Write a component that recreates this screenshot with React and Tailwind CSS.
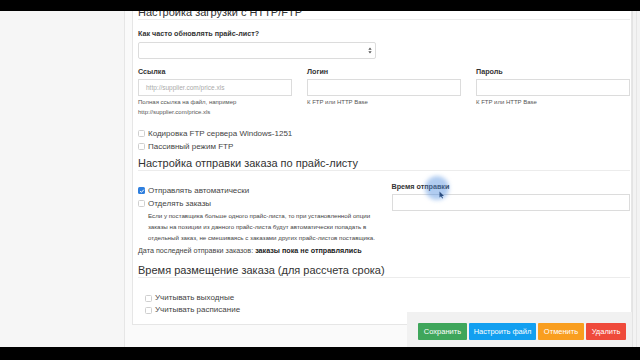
import React from "react";

const font = { fontFamily: '"Liberation Sans", Arial, sans-serif' };

function Box({ checked }) {
  if (checked) {
    return (
      <span className="inline-flex h-[7px] w-[7px] shrink-0 items-center justify-center rounded-[1.5px] bg-[#2f7fde]">
        <svg viewBox="0 0 8 8" className="h-[6px] w-[6px]">
          <path d="M1.5 4.2 L3.2 5.8 L6.5 2.2" fill="none" stroke="#fff" strokeWidth="1.3" />
        </svg>
      </span>
    );
  }
  return <span className="inline-block h-[7px] w-[7px] shrink-0 rounded-[1.5px] border border-[#cfcfcf] bg-white" />;
}

function Check({ label, checked, small, className = "" }) {
  return (
    <div className={`flex items-center gap-[3px] text-[8px] text-[#444] ${small ? "h-[12px]" : "h-[13px]"} ${className}`}>
      <Box checked={checked} />
      <span>{label}</span>
    </div>
  );
}

function Heading({ children, className = "" }) {
  return (
    <div className={`h-[15px] border-b border-[#ececec] text-[11px] leading-[14px] text-[#333] ${className}`}>
      {children}
    </div>
  );
}

function Label({ children, className = "" }) {
  return <div className={`h-[10px] text-[7.2px] font-bold leading-[10px] text-[#333] ${className}`}>{children}</div>;
}

function Input({ placeholder, className = "" }) {
  return (
    <div className={`flex h-[17px] items-center border border-[#dcdcdc] bg-white px-[7px] text-[6.5px] text-[#aaa] ${className}`}>
      {placeholder}
    </div>
  );
}

export default function App() {
  return (
    <div className="flex h-[360px] w-[640px] flex-col overflow-hidden bg-black" style={font}>
      <div className="h-[11px] bg-black" />
      <div className="relative flex flex-1 overflow-hidden bg-[#fafafa]">
        <div className="w-[125px] shrink-0 border-r border-[#e6e6e6] bg-[#f6f6f6]" />
        <div className="w-[507px] shrink-0 pl-[7px]">
          <div className="-mt-[20px] border border-[#e6e6e6] bg-white pb-[8px] pl-[5px] pr-[1px] pt-[13px]">
            <Heading>Настройка загрузки с HTTP/FTP</Heading>
            <Label className="mt-[9px]">Как часто обновлять прайс-лист?</Label>
            <div className="mt-[3px] flex h-[17px] w-[238px] items-center justify-end rounded-[2px] border border-[#dcdcdc] bg-white pr-[3px]">
              <svg viewBox="0 0 6 10" className="h-[7px] w-[4px]">
                <path d="M3 0.5 L5.5 4 L0.5 4 Z M3 9.5 L5.5 6 L0.5 6 Z" fill="#555" />
              </svg>
            </div>
            <div className="mt-[8px] grid grid-cols-3 gap-x-[15px]">
              <div>
                <Label>Ссылка</Label>
                <Input className="mt-[2px]" placeholder="http://supplier.com/price.xls" />
                <div className="mt-[1px] text-[6px] leading-[10px] text-[#555]">
                  Полная ссылка на файл, например
                  <br />
                  http://supplier.com/price.xls
                </div>
              </div>
              <div>
                <Label>Логин</Label>
                <Input className="mt-[2px]" />
                <div className="mt-[1px] text-[6px] leading-[10px] text-[#555]">К FTP или HTTP Base</div>
              </div>
              <div>
                <Label>Пароль</Label>
                <Input className="mt-[2px]" />
                <div className="mt-[1px] text-[6px] leading-[10px] text-[#555]">К FTP или HTTP Base</div>
              </div>
            </div>
            <Check className="mt-[10px]" label="Кодировка FTP сервера Windows-1251" />
            <Check label="Пассивный режим FTP" />
            <Heading className="mt-[3px]">Настройка отправки заказа по прайс-листу</Heading>
            <div className="grid grid-cols-2 gap-x-[15px]">
              <div className="pt-[13px]">
                <Check label="Отправлять автоматически" checked />
                <Check label="Отделять заказы" />
                <div className="ml-[10px] whitespace-nowrap text-[6.2px] leading-[11px] text-[#444]">
                  Если у поставщика больше одного прайс-листа, то при установленной опции
                  <br />
                  заказы на позиции из данного прайс-листа будут автоматически попадать в
                  <br />
                  отдельный заказ, не смешиваясь с заказами других прайс-листов поставщика.
                </div>
              </div>
              <div className="pt-[11px]">
                <Label>Время отправки</Label>
                <Input className="mt-[2px]" />
              </div>
            </div>
            <div className="mt-[2px] h-[11px] whitespace-nowrap text-[7.2px] leading-[11px] text-[#444]">
              Дата последней отправки заказов: <b className="text-[#222]">заказы пока не отправлялись</b>
            </div>
            <Heading className="mt-[7px]">Время размещение заказа (для рассчета срока)</Heading>
            <div className="ml-[7px] mt-[14px]">
              <Check small label="Учитывать выходные" />
              <Check small label="Учитывать расписание" />
            </div>
          </div>
        </div>
        <div className="flex-1 border-l border-[#e3e3e3] bg-[#f3f3f3]">
          <div className="ml-[3px] h-full w-px bg-[#e6e6e6]" />
        </div>

        <div className="absolute bottom-0 left-[407px] flex h-[35px] w-[225px] items-start gap-[2px] bg-[#f1f1f1] pl-[11px] pt-[11px] text-[7.5px] text-white">
          <div className="flex h-[17px] w-[49px] items-center justify-center rounded-[1px] bg-[#3fa65b]">Сохранить</div>
          <div className="flex h-[17px] w-[67px] items-center justify-center rounded-[1px] bg-[#129ff0]">Настроить файл</div>
          <div className="flex h-[17px] w-[46px] items-center justify-center rounded-[1px] bg-[#f99e1f]">Отменить</div>
          <div className="flex h-[17px] w-[40px] items-center justify-center rounded-[1px] bg-[#ef4a3b]">Удалить</div>
        </div>

        <div className="pointer-events-none absolute left-[425px] top-[165px] h-[24px] w-[24px] rounded-full bg-[#4f8fe0]/45 blur-[2px]" />
        <svg className="pointer-events-none absolute left-[439px] top-[180px] h-[8px] w-[6px]" viewBox="0 0 6 8">
          <path d="M0.5 0.5 L0.5 6.5 L2 5.2 L3.2 7.5 L4 7.1 L2.9 4.9 L5 4.9 Z" fill="#2a4d80" />
        </svg>
      </div>
      <div className="h-[13px] bg-black" />
    </div>
  );
}
